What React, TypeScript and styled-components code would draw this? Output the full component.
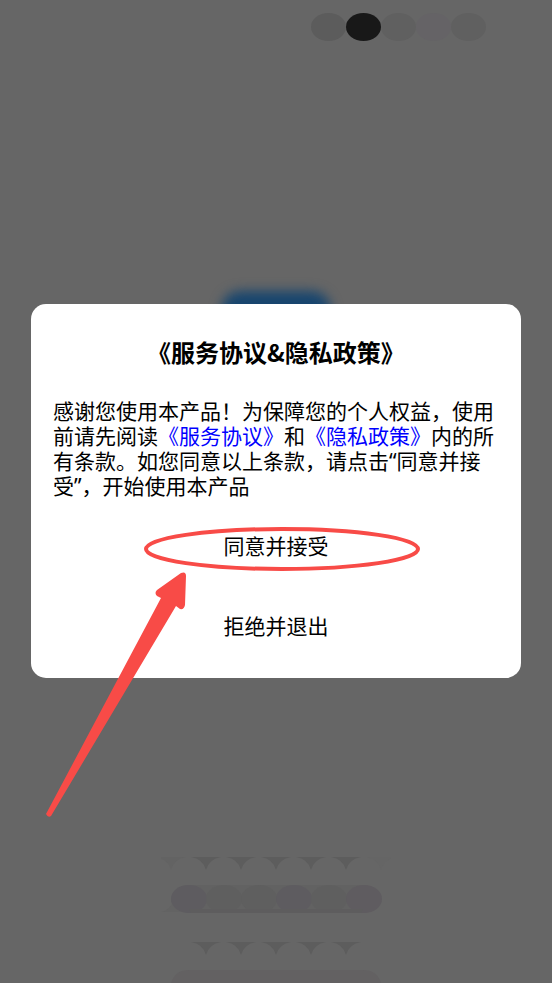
import React from "react";
import styled, { createGlobalStyle } from "styled-components";

const GlobalStyle = createGlobalStyle`
  * { box-sizing: border-box; }
  body {
    margin: 0;
    background: #666;
    font-family: "Noto Sans", "Noto Sans CJK SC", sans-serif;
    color: #000;
  }
`;

const Screen = styled.main`
  position: relative;
  display: flex;
  align-items: center;
  justify-content: center;
  min-height: 100vh;
  padding: 24px 31px 26px;
  overflow: hidden;
`;

const Backdrop = styled.div`
  position: absolute;
  inset: 0;
  display: flex;
  flex-direction: column;
  align-items: center;
  justify-content: space-between;
  padding-top: 13px;
`;

const StatusDots = styled.div`
  display: flex;
  align-self: flex-end;
  margin-right: 66px;
`;

const Dot = styled.span<{ $color: string }>`
  width: 35px;
  height: 28px;
  border-radius: 50%;
  background: ${(p) => p.$color};
`;

const AppIcon = styled.div`
  position: absolute;
  left: 50%;
  top: 291px;
  width: 110px;
  height: 110px;
  margin-left: -55px;
  border-radius: 20px;
  background: #17456e;
  filter: blur(6px);
`;

const Mosaic = styled.svg`
  display: block;
  width: 230px;
  height: 128px;
`;

const Dialog = styled.section`
  position: relative;
  display: flex;
  flex-direction: column;
  width: 100%;
  padding: 30px 22px 36px;
  border-radius: 15px;
  background: #fff;
`;

const Title = styled.h1`
  margin: 0 0 30px;
  font-family: "Noto Sans CJK SC", sans-serif;
  font-size: 24px;
  line-height: 35px;
  font-weight: 700;
  text-align: center;
`;

const Message = styled.p`
  margin: 0 0 32px;
  font-size: 21px;
  line-height: 25px;
`;

const PolicyLink = styled.a`
  color: #00f;
  text-decoration: none;
`;

const Actions = styled.div`
  display: flex;
  flex-direction: column;
  align-items: center;
  gap: 49px;
`;

const ActionButton = styled.button`
  position: relative;
  padding: 0 8px;
  border: 0;
  background: none;
  color: inherit;
  font: inherit;
  font-size: 21px;
  line-height: 31px;
  cursor: pointer;
`;

const Ring = styled.svg`
  position: absolute;
  left: 50%;
  top: 50%;
  width: 278px;
  height: 46px;
  margin: -20px 0 0 -133px;
  pointer-events: none;
`;

const Arrow = styled.svg`
  position: absolute;
  left: 14px;
  bottom: -141px;
  width: 144px;
  height: 250px;
  pointer-events: none;
`;

const dots = ["#5c5c5c", "#181818", "#606060", "#656366", "#606060"];
const cusps = [45, 80, 115, 150, 185];
const beads = ["#5e5c60", "#5f5f5f", "#5f5f5f", "#5e5c60", "#5f5f5f", "#5f5c60"];

const cusp = (x: number, y: number) =>
  `M${x - 15} ${y}H${x + 15}Q${x + 3} ${y + 2} ${x} ${y + 13}Q${x - 3} ${y + 2} ${x - 15} ${y}Z`;

export default function App() {
  return (
    <>
      <GlobalStyle />
      <Screen lang="zh-CN">
        <Backdrop aria-hidden="true">
          <StatusDots>
            {dots.map((color, i) => (
              <Dot key={i} $color={color} />
            ))}
          </StatusDots>
          <AppIcon />
          <Mosaic viewBox="0 0 230 128">
            <path d={cusp(10, 2)} fill="#636363" />
            <path d={cusp(220, 2)} fill="#656565" />
            {cusps.map((x) => (
              <path key={x} d={cusp(x, 2)} fill="#5d5d5d" />
            ))}
            <path d="M0 57Q9 55 12 46L30 57Z" fill="#636363" />
            <path d="M28 57Q10 55 10 43Q14 30 28 30H202Q220 34 220 43Q218 57 204 57Z" fill="#626262" />
            {beads.map((color, i) => (
              <ellipse key={i} cx={28 + i * 35} cy="44" rx="18" ry="14" fill={color} />
            ))}
            <path d="M28 54H202L200 58H30Z" fill="#5e5d5e" />
            {cusps.map((x) => (
              <path key={x} d={cusp(x, 87)} fill="#5d5d5d" />
            ))}
            <path d="M10 128Q14 115 28 115H202Q216 115 220 128Z" fill="#636162" />
          </Mosaic>
        </Backdrop>

        <Dialog role="dialog" aria-modal="true" aria-labelledby="policy-title">
          <Title id="policy-title">《服务协议&amp;隐私政策》</Title>
          <Message>
            感谢您使用本产品！为保障您的个人权益，使用前请先阅读
            <PolicyLink href="#service">《服务协议》</PolicyLink>和
            <PolicyLink href="#privacy">《隐私政策》</PolicyLink>
            内的所有条款。如您同意以上条款，请点击“同意并接受”，开始使用本产品
          </Message>
          <Actions>
            <ActionButton type="button">
              同意并接受
              <Ring viewBox="0 0 278 46" aria-hidden="true">
                <ellipse cx="139" cy="23" rx="136" ry="20" fill="none" stroke="#f84b47" strokeWidth="4" />
              </Ring>
            </ActionButton>
            <ActionButton type="button">拒绝并退出</ActionButton>
          </Actions>
          <Arrow viewBox="0 0 144 250" aria-hidden="true">
            <path
              d="M1 245L116 29L112 27Q109 24 112 21L136 4Q141 2 141 7L140 36Q139 41 135 40L131 37L6 247Q3 249 1 245Z"
              fill="#f84b47"
            />
          </Arrow>
        </Dialog>
      </Screen>
    </>
  );
}
